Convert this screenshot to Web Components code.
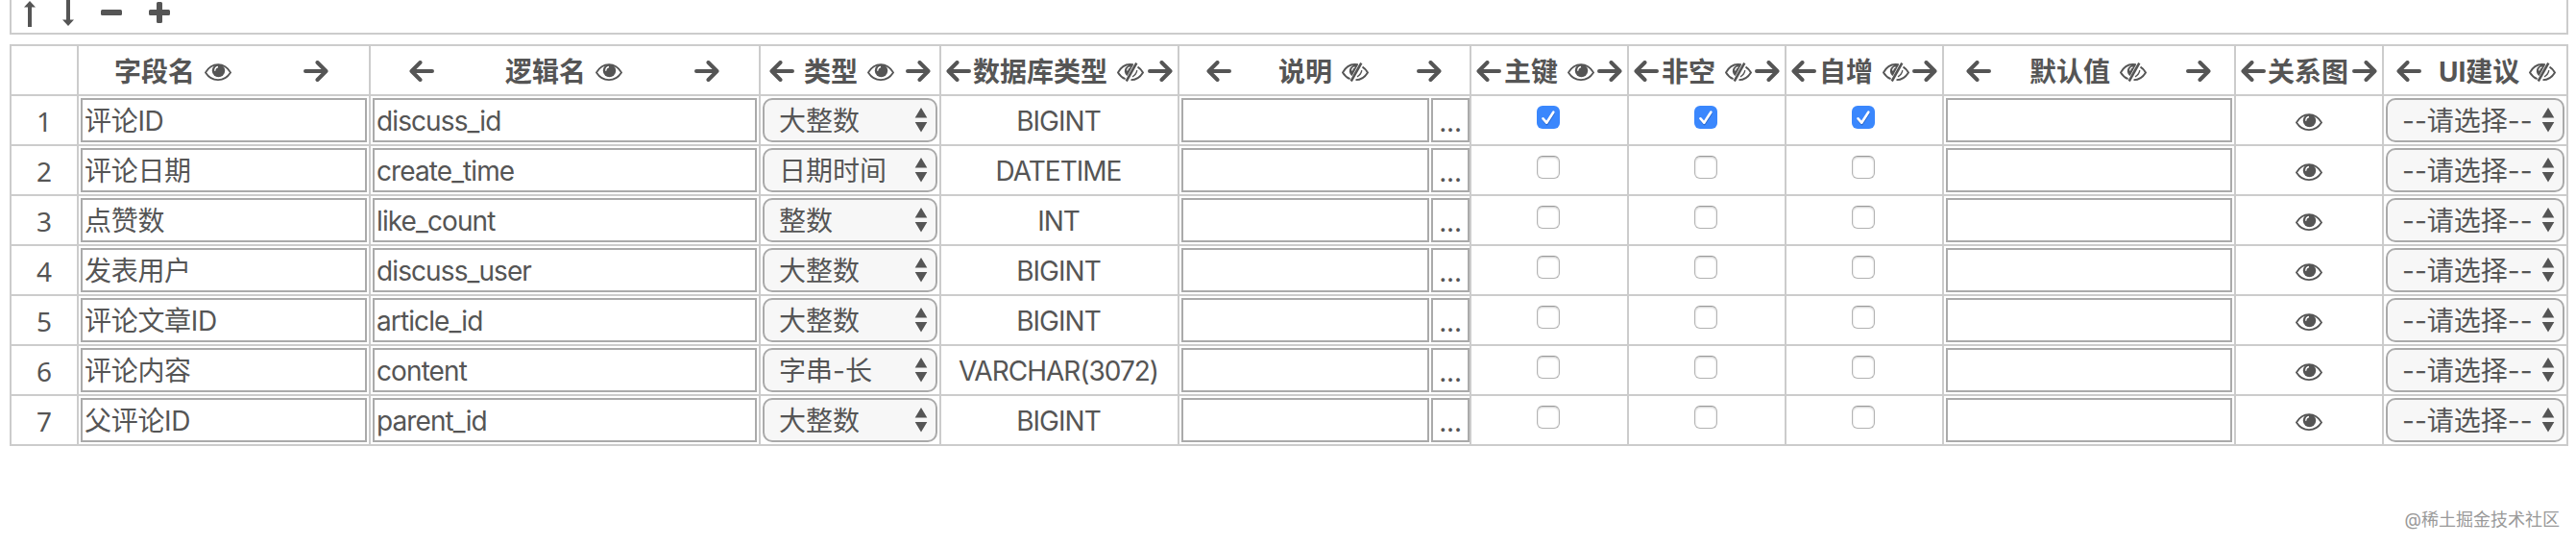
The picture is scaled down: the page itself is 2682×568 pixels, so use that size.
<!DOCTYPE html>
<html lang="zh-CN">
<head>
<meta charset="utf-8">
<title>字段</title>
<style>
    body {
        margin: 0;
        height: 568px;
        overflow: hidden;
        background: #fff;
        color: #555;
        font: 28px/40px Inter, "Noto Sans CJK SC", sans-serif;
    }
</style>
</head>
<body>
<field-editor></field-editor>
<script>
const ICONS = {
    eye: [28, 18, `<path d="M1 9.400C7.500-1.600 20.500-1.600 27 9.400C20.500 19.600 7.500 19.600 1 9.400Z" fill="none" stroke="currentColor" stroke-width="1.800"/><circle cx="14.500" cy="7.500" r="6.700" fill="currentColor"/><path d="M10.700 7.700Q10.800 4.200 14 3.500" fill="none" stroke="#fff" stroke-width="1.300"/>`],
    'eye-off': [28, 20, `<path d="M16.800 2.300C9.500 .8 4.200 4.500 1 10.400C3 13.700 5.500 15.900 8.600 17.200M21.500 4.600C23.700 5.900 25.500 7.900 27 10.400C24 15.300 19.500 18.100 14.500 18.100" fill="none" stroke="currentColor" stroke-width="1.900"/><path d="M17 2.300C11 2 7.500 5.500 7.900 9.500C8.200 11.700 9.300 13.300 10.700 14.100Z" fill="currentColor"/><path d="M10.600 8.500Q10.800 5.800 13.500 4.800" fill="none" stroke="#fff" stroke-width="1.200"/><path d="M20.300.7L9.700 19.500" stroke="currentColor" stroke-width="2.600"/><path d="M20.800 8.200C20.300 11.500 18.500 13.500 16 14.800" fill="none" stroke="currentColor" stroke-width="1.400"/>`],
    left: [26, 22, `<path d="M24 11H3M11.500 2L2.500 11L11.500 20" fill="none" stroke="currentColor" stroke-width="4" stroke-linecap="round" stroke-linejoin="round"/>`],
    right: [26, 22, `<path d="M2 11H23M14.500 2L23.500 11L14.500 20" fill="none" stroke="currentColor" stroke-width="4" stroke-linecap="round" stroke-linejoin="round"/>`],
    up: [12, 28, `<path d="M6 1L12 7.500H8V28H4V7.500H0Z" fill="currentColor"/>`],
    down: [12, 28, `<path d="M6 27L12 20.500H8V0H4V20.500H0Z" fill="currentColor"/>`],
    minus: [22, 22, `<rect y="8" width="22" height="6" rx="1.500" fill="currentColor"/>`],
    plus: [22, 22, `<path d="M1.500 8H8V1.500Q8 0 9.500 0H12.500Q14 0 14 1.500V8H20.500Q22 8 22 9.500V12.500Q22 14 20.500 14H14V20.500Q14 22 12.500 22H9.500Q8 22 8 20.500V14H1.500Q0 14 0 12.500V9.500Q0 8 1.500 8Z" fill="currentColor"/>`],
    sorter: [14, 28, `<path d="M7 1L13.300 11.500H.7ZM.7 16H13.300L7 26.500Z" fill="currentColor"/>`]
};

class FieldIcon extends HTMLElement {
    constructor() {
        super();
        this.attachShadow({ mode: 'open' });
    }

    connectedCallback() {
        const [width, height, shape] = ICONS[this.getAttribute('name')];
        this.shadowRoot.innerHTML = `
        <style>
            :host { display: block; flex: none; }
            svg { display: block; }
        </style>
        <svg width="${width}" height="${height}" viewBox="0 0 ${width} ${height}">${shape}</svg>`;
    }
}

class FieldToolbar extends HTMLElement {
    constructor() {
        super();
        this.attachShadow({ mode: 'open' }).innerHTML = `
        <style>
            :host {
                display: flex;
                align-items: flex-start;
                box-sizing: border-box;
                height: 36px;
                padding-left: 13px;
                border: 2px solid #ccc;
                border-top: 0;
            }
            .down { margin: 0 0 0 28px; }
            .minus { margin: 2px 0 0 28px; }
            .plus { margin: 2px 0 0 28px; }
        </style>
        <field-icon name="up"></field-icon>
        <field-icon class="down" name="down"></field-icon>
        <field-icon class="minus" name="minus"></field-icon>
        <field-icon class="plus" name="plus"></field-icon>`;
    }
}

// Column heading: optional move arrows around a label and its visibility eye
class FieldHead extends HTMLElement {
    constructor() {
        super();
        this.attachShadow({ mode: 'open' });
    }

    connectedCallback() {
        const arrows = this.getAttribute('arrows');
        const eye = this.getAttribute('eye');
        const [pad, before, after] = this.getAttribute('space').split(' ');
        this.shadowRoot.innerHTML = `
        <style>
            :host {
                display: flex;
                align-items: center;
                box-sizing: border-box;
                height: 100%;
                padding: 2px 0 0 ${pad}px;
                font-weight: 700;
                white-space: nowrap;
            }
            .label {
                display: flex;
                align-items: center;
                gap: 10px;
                margin: 0 ${after}px 0 ${before}px;
            }
            .label span { margin-top: 1px; }
            .label field-icon { margin-top: 1px; }
        </style>
        ${arrows.includes('l') ? '<field-icon name="left"></field-icon>' : ''}
        <div class="label"><span><slot></slot></span>${eye ? `<field-icon name="${eye}"></field-icon>` : ''}</div>
        ${arrows.includes('r') ? '<field-icon name="right"></field-icon>' : ''}`;
    }
}

class FieldInput extends HTMLElement {
    constructor() {
        super();
        this.attachShadow({ mode: 'open' }).innerHTML = `
        <style>
            :host {
                display: block;
                flex: 1;
                box-sizing: border-box;
                height: 46px;
                margin: 0 2px;
                padding: 2px 2px 0;
                border: 2px solid #aaa;
                white-space: nowrap;
            }
        </style>
        <slot></slot>`;
    }
}

class FieldSelect extends HTMLElement {
    constructor() {
        super();
        this.attachShadow({ mode: 'open' }).innerHTML = `
        <style>
            :host {
                display: flex;
                flex: 1;
                align-items: center;
                justify-content: space-between;
                box-sizing: border-box;
                height: 46px;
                margin: 0 2px;
                padding: 0 8px 0 15px;
                border: 2px solid #aaa;
                border-radius: 10px;
                background: #f7f7f7;
                white-space: nowrap;
            }
            span { margin-top: 2px; }
        </style>
        <span><slot></slot></span>
        <field-icon name="sorter"></field-icon>`;
    }
}

class FieldCheck extends HTMLElement {
    constructor() {
        super();
        this.attachShadow({ mode: 'open' }).innerHTML = `
        <style>
            :host {
                display: block;
                box-sizing: border-box;
                width: 24px;
                height: 24px;
                margin: -6px 2px 0 0;
                border: 1px solid #b4b4b4;
                border-top-color: #999;
                border-radius: 6px;
                box-shadow: inset 0 1px 2px rgba(0, 0, 0, .22);
            }
            svg { display: none; }
            :host([checked]) {
                border: 0;
                background: #3a87fd;
                box-shadow: none;
            }
            :host([checked]) svg { display: block; }
        </style>
        <svg width="24" height="24" viewBox="0 0 24 24" fill="none" stroke-width="2.600" stroke-linecap="round" stroke-linejoin="round">
            <path d="M6.800 14.500L10.500 19L17.500 8" stroke="#2b68cb"/>
            <path d="M6.500 13.300L10.200 17.700L17.300 6.700" stroke="#fff"/>
        </svg>`;
    }
}

class FieldMore extends HTMLElement {
    constructor() {
        super();
        this.attachShadow({ mode: 'open' }).innerHTML = `
        <style>
            :host {
                display: block;
                box-sizing: border-box;
                width: 40px;
                height: 46px;
                padding-top: 3px;
                border: 2px solid #aaa;
                line-height: 40px;
                letter-spacing: -.3px;
                text-align: center;
            }
        </style>
        <slot></slot>`;
    }
}

const HEADS = [
    ['字段名', 'eye', 'r', '37 0 75'],
    ['逻辑名', 'eye', 'lr', '40 74 75'],
    ['类型', 'eye', 'lr', '9 10 12'],
    ['数据库类型', 'eye-off', 'lr', '5 2 4'],
    ['说明', 'eye-off', 'lr', '28 49 50'],
    ['主键', 'eye', 'lr', '5 3 3'],
    ['非空', 'eye-off', 'lr', '5 3 3'],
    ['自增', 'eye-off', 'lr', '5 3 3'],
    ['默认值', 'eye-off', 'lr', '23 40 41'],
    ['关系图', '', 'lr', '5 2 4'],
    ['UI建议', 'eye-off', 'l', '13 18 0']
];

const FIELDS = [
    ['评论ID', 'discuss_id', '大整数', 'BIGINT', true],
    ['评论日期', 'create_time', '日期时间', 'DATETIME', false],
    ['点赞数', 'like_count', '整数', 'INT', false],
    ['发表用户', 'discuss_user', '大整数', 'BIGINT', false],
    ['评论文章ID', 'article_id', '大整数', 'BIGINT', false],
    ['评论内容', 'content', '字串-长', 'VARCHAR(3072)', false],
    ['父评论ID', 'parent_id', '大整数', 'BIGINT', false]
];

class FieldTable extends HTMLElement {
    constructor() {
        super();
        this.attachShadow({ mode: 'open' });
        this.render();
    }

    render() {
        const heads = HEADS.map(([label, eye, arrows, space]) =>
            `<div class="head"><field-head eye="${eye}" arrows="${arrows}" space="${space}">${label}</field-head></div>`).join('');
        const rows = FIELDS.map((field, i) => this._getRow(field, i + 1)).join('');
        this.shadowRoot.innerHTML = `
        <style>
            :host {
                display: grid;
                grid-template-columns: 70px 304px 406px 188px 248px 304px 164px 164px 164px 304px 154px 192px;
                grid-auto-rows: 52px;
                border: solid #ccc;
                border-width: 2px 0 0 2px;
            }
            div {
                display: flex;
                align-items: center;
                justify-content: center;
                box-sizing: border-box;
                border: solid #ccc;
                border-width: 0 2px 2px 0;
                white-space: nowrap;
            }
            .head { justify-content: flex-start; }
            .no {
                padding-top: 2px;
                font-family: "Noto Sans", sans-serif;
            }
            .name { letter-spacing: -.3px; }
            .latin { letter-spacing: -.9px; }
            .db {
                padding: 2px 2px 0 0;
                letter-spacing: -1px;
            }
            .row-eye { margin: 4px 1px 0 0; }
        </style>
        <div></div>${heads}${rows}`;
    }

    _getRow([name, code, type, db, checked], no) {
        const check = `<div><field-check ${checked ? 'checked' : ''}></field-check></div>`;
        return `
        <div class="no">${no}</div>
        <div><field-input class="name">${name}</field-input></div>
        <div><field-input class="latin">${code}</field-input></div>
        <div><field-select>${type}</field-select></div>
        <div class="db">${db}</div>
        <div><field-input></field-input><field-more>...</field-more></div>
        ${check}${check}${check}
        <div><field-input></field-input></div>
        <div><field-icon class="row-eye" name="eye"></field-icon></div>
        <div><field-select>--请选择--</field-select></div>`;
    }
}

class FieldEditor extends HTMLElement {
    constructor() {
        super();
        this.attachShadow({ mode: 'open' }).innerHTML = `
        <style>
            :host {
                display: flex;
                flex-direction: column;
                gap: 10px;
                box-sizing: border-box;
                width: 2682px;
                height: 568px;
                padding: 0 8px 0 10px;
            }
            footer {
                align-self: flex-end;
                margin: 54px 9px 0 0;
                color: #999;
                font-size: 18px;
                line-height: 26px;
            }
        </style>
        <field-toolbar></field-toolbar>
        <field-table></field-table>
        <footer>@稀土掘金技术社区</footer>`;
    }
}

customElements.define('field-icon', FieldIcon);
customElements.define('field-toolbar', FieldToolbar);
customElements.define('field-head', FieldHead);
customElements.define('field-input', FieldInput);
customElements.define('field-select', FieldSelect);
customElements.define('field-check', FieldCheck);
customElements.define('field-more', FieldMore);
customElements.define('field-table', FieldTable);
customElements.define('field-editor', FieldEditor);
</script>
</body>
</html>
